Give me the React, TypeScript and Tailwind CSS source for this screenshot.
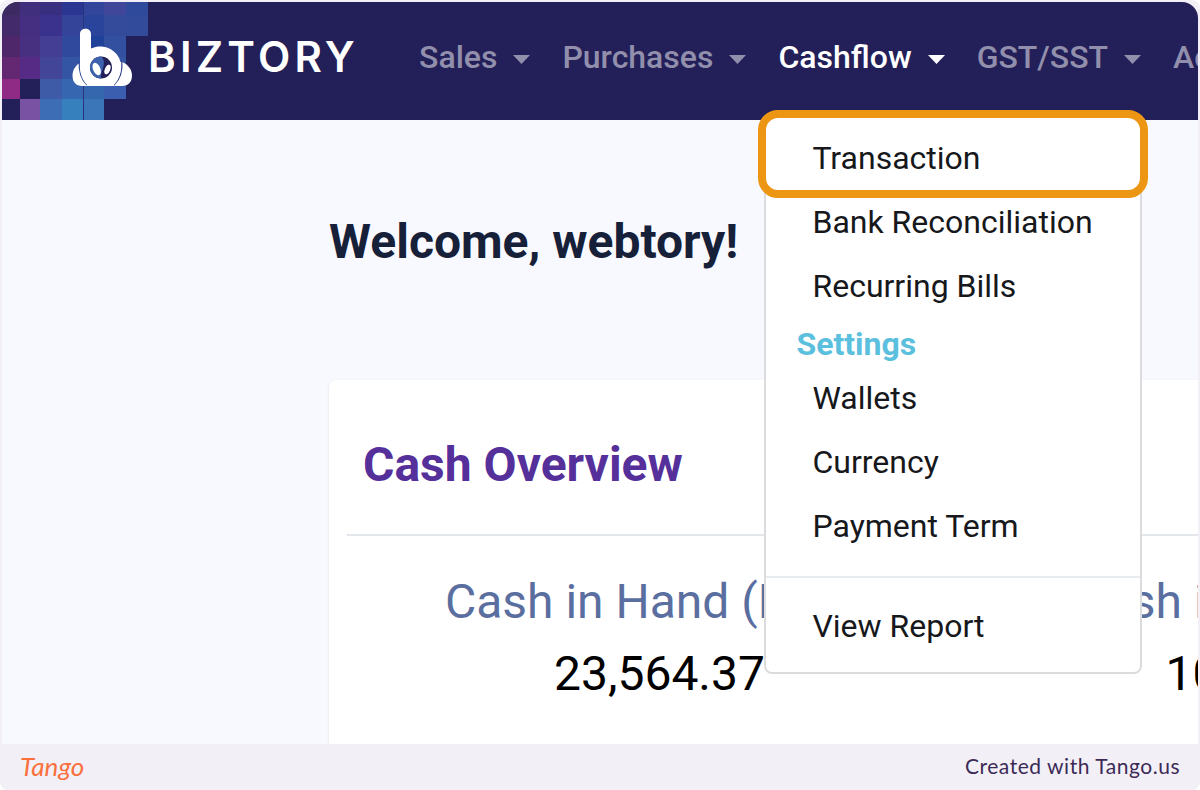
import React from 'react';

const tiles = [
  { y: 0, h: 13, fills: ['#3d2a63', '#3f2f7c', '#382f80', '#2b3592', '#33459b', '#40479a', '#304a9b'] },
  { y: 13, h: 21, fills: ['#432a6a', '#452f81', '#3a328c', '#344498', '#2b449b', '#344b9c', '#324b9b'] },
  { y: 34, h: 21, fills: ['#4d2769', '#47307f', '#443f94', '#31499c', '#20419a', '#3350a0'] },
  { y: 55, h: 22, fills: ['#642873', '#552b86', '#434698', '#3455a3', '#2d55a3', '#3554a2'] },
  { y: 77, h: 20, fills: ['#8f2b84', '#231f58', '#3e5ba8', '#3766b0', '#3567af', '#3b5fae'] },
  { y: 97, h: 21, fills: ['#231f58', '#7952a4', '#3d6db5', '#3580bd', '#3a76b8'] },
];

const columns = [0, 18, 38, 60, 81, 102, 124, 146];

const navItems = ['Sales', 'Purchases', 'Cashflow', 'GST/SST', 'Accounting'];

const balances = [
  { label: 'Cash in Hand (MYR)', value: '23,564.37' },
  { label: 'Cash in Bank (MYR)', value: '109,324.15' },
];

function Logo() {
  return (
    <svg width="146" height="118" viewBox="0 0 146 118" className="shrink-0" aria-hidden="true">
      <g shapeRendering="crispEdges">
        {tiles.map((row) =>
          row.fills.map((fill, i) => (
            <rect key={`${row.y}-${i}`} x={columns[i]} y={row.y} width={columns[i + 1] - columns[i]} height={row.h} fill={fill} />
          ))
        )}
      </g>
      <path d="M81.500 0V118" stroke="#26347f" strokeWidth="1" />
      {/* ears */}
      <path d="M80 60C74 62 70.500 68 70.500 73.500C70.500 80 74 84 80 84H90V60Z" fill="#fff" />
      <path d="M120 60C126 62 130 68 130 73.500C130 80 126 84 120 84H108V60Z" fill="#fff" />
      {/* seams between the ears and the head */}
      <path d="M77.300 59C76.500 69 79 77 85 83" stroke="#2c4b96" strokeWidth="1.200" fill="none" />
      <path d="M119.800 59C120.800 69 118 77 112 83" stroke="#2c3a86" strokeWidth="1.200" fill="none" />
      {/* head */}
      <path
        d="M78 32C78 25 89 25 89 32V46.500C103 40 119 50 119 64C119 73 116 79 111 84H86C81 79 78 73 78 64Z"
        fill="#fff"
      />
      <circle cx="99" cy="65.500" r="11" fill="#231f58" />
      <path d="M99 54.500A11 11 0 0 0 99 76.500C98 70 106 60 99 54.500Z" fill="#3c62ad" />
      <ellipse cx="94.700" cy="67" rx="3.600" ry="6.500" fill="#fff" transform="rotate(-24 94.700 67)" />
      <ellipse cx="105.500" cy="67.500" rx="2.600" ry="5" fill="#fff" transform="rotate(22 105.500 67.500)" />
    </svg>
  );
}

function Caret() {
  return (
    <svg width="17" height="9" viewBox="0 0 17 9" fill="currentColor" className="mt-1 shrink-0" aria-hidden="true">
      <path d="M0 0H17L8.500 9Z" />
    </svg>
  );
}

function MenuItem({ children }: { children: React.ReactNode }) {
  return (
    <a href="#" className="block px-[46px] py-2 text-[32px] leading-[48px] whitespace-nowrap text-[#16181b]">
      {children}
    </a>
  );
}

function CashflowMenu() {
  return (
    <div className="absolute top-[81px] -left-3.5 z-10 w-[378px] rounded-lg border-2 border-[#dcdcdf] bg-white pt-2.5 pb-3.5 font-normal">
      <div className="relative">
        <MenuItem>Transaction</MenuItem>
        <div className="pointer-events-none absolute -inset-x-2 -top-4 -bottom-2 rounded-[20px] border-8 border-[#ec9613]" />
      </div>
      <MenuItem>Bank Reconciliation</MenuItem>
      <MenuItem>Recurring Bills</MenuItem>
      <h3 className="px-[30px] pt-1 text-[32px] leading-[44px] font-bold text-[#5bc0de]">Settings</h3>
      <MenuItem>Wallets</MenuItem>
      <MenuItem>Currency</MenuItem>
      <MenuItem>Payment Term</MenuItem>
      <hr className="mt-[18px] mb-4 border-t-2 border-[#e9ecef]" />
      <MenuItem>View Report</MenuItem>
    </div>
  );
}

export default function App() {
  return (
    <div className="flex min-h-screen flex-col overflow-hidden rounded-lg bg-[#f2f0f6] px-0.5 pt-0.5 font-['Roboto',sans-serif]">
      <div className="flex flex-1 flex-col overflow-hidden rounded-t-2xl bg-[#f8f9fe]">
        <header className="flex h-[118px] bg-[#231f58] text-white">
          <a href="#" className="flex shrink-0 items-center">
            <Logo />
            <span className="pb-2 font-['Inter',sans-serif] text-[42px] leading-[48px] font-semibold tracking-widest">BIZTORY</span>
          </a>
          <nav className="ml-auto flex min-w-0 items-center pb-2">
            <ul className="flex w-[779px] gap-8">
              {navItems.map((item) => (
                <li key={item} className={item === 'Cashflow' ? 'relative text-white' : 'text-[#918fac]'}>
                  <button className="flex items-center gap-4 text-[32px] leading-[48px] font-medium">
                    {item}
                    <Caret />
                  </button>
                  {item === 'Cashflow' && <CashflowMenu />}
                </li>
              ))}
            </ul>
          </nav>
        </header>

        <main className="flex flex-1 flex-col pt-[90px] pl-[327px]">
          <h1 className="text-[48px] leading-[64px] font-bold text-[#172039]">Welcome, webtory!</h1>
          <section className="mt-[106px] w-[1286px] flex-1 rounded-t-lg bg-white px-[18px] pb-8 shadow">
            <h2 className="border-b-2 border-[#e3e7eb] px-4 pt-[52px] pb-9 text-[48px] leading-[66px] font-bold text-[#55309a]">
              Cash Overview
            </h2>
            <dl className="grid grid-cols-2 pt-[30px] text-center text-[48px] leading-[72px]">
              {balances.map((balance) => (
                <div key={balance.label}>
                  <dt className="text-[#5a6f9f]">{balance.label}</dt>
                  <dd className="text-black">{balance.value}</dd>
                </div>
              ))}
            </dl>
          </section>
        </main>
      </div>

      <footer className="flex h-[46px] shrink-0 items-center justify-between px-[18px] pb-0.5 font-['Lato',sans-serif]">
        <span className="text-[26px] leading-8 text-[#f9703e] italic">Tango</span>
        <span className="text-[21px] leading-8 tracking-wide text-[#3c2a56]">Created with Tango.us</span>
      </footer>
    </div>
  );
}
